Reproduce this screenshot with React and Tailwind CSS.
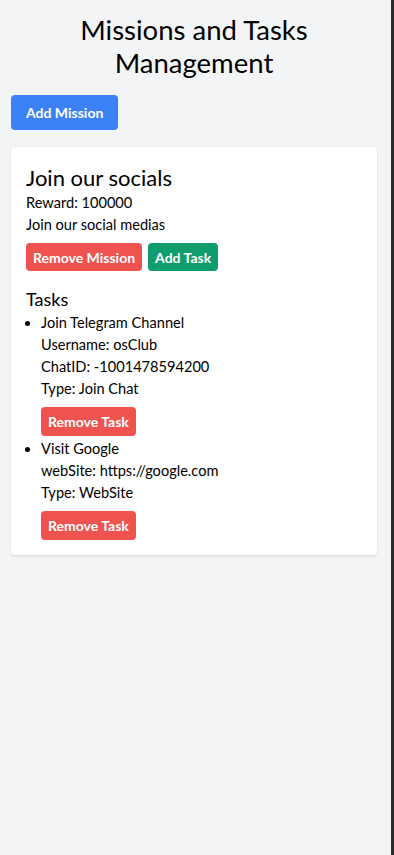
import React from 'react';

const tasks = [
    {
        id: 1,
        name: 'Join Telegram Channel',
        details: ['Username: osClub', 'ChatID: -1001478594200', 'Type: Join Chat'],
    },
    {
        id: 2,
        name: 'Visit Google',
        details: ['webSite: https://google.com', 'Type: WebSite'],
    },
];

const App = () => {
    return (
        <div className="min-h-screen bg-[#f3f4f6] flex text-black" style={{ fontFamily: 'Lato, "Noto Sans", sans-serif' }}>
            <div className="flex-1 pl-[11px] pr-[14px] pt-[13px]">
                {/* Header */}
                <h1 className="text-center text-[27.5px] leading-[33px] px-10">
                    Missions and Tasks Management
                </h1>

                <button className="mt-[16px] h-[35px] px-[15px] bg-[#3b82f6] text-white text-[14px] font-bold rounded">
                    Add Mission
                </button>

                {/* Mission card */}
                <div className="mt-[17px] bg-white rounded shadow pl-[15px] pr-4 pt-[17px] pb-[13px]">
                    <h2 className="text-[22px] leading-[27px]">Join our socials</h2>
                    <p className="text-[14.6px] leading-[22px] mt-[1px]">Reward: 100000</p>
                    <p className="text-[14.6px] leading-[22px]">Join our social medias</p>

                    <div className="flex gap-[6px] mt-[7px]">
                        <button className="h-[28px] px-[7px] bg-[#ef5350] text-white text-[14px] font-bold rounded">
                            Remove Mission
                        </button>
                        <button className="h-[28px] px-[7px] bg-[#0f9d6d] text-white text-[14px] font-bold rounded">
                            Add Task
                        </button>
                    </div>

                    <h3 className="text-[18px] leading-[24px] mt-[16px]">Tasks</h3>
                    <ul className="list-disc pl-[15px] mt-[1px] text-[14.6px] leading-[22px]">
                        {tasks.map((task) => (
                            <li key={task.id}>
                                <p>{task.name}</p>
                                {task.details.map((d) => (
                                    <p key={d}>{d}</p>
                                ))}
                                <button className="mt-[7px] mb-[2px] h-[29px] px-[7px] bg-[#ef5350] text-white text-[14px] font-bold rounded">
                                    Remove Task
                                </button>
                            </li>
                        ))}
                    </ul>
                </div>
            </div>
            <div className="w-[3px] bg-[#2b2b2b]" />
        </div>
    );
};

export default App;
